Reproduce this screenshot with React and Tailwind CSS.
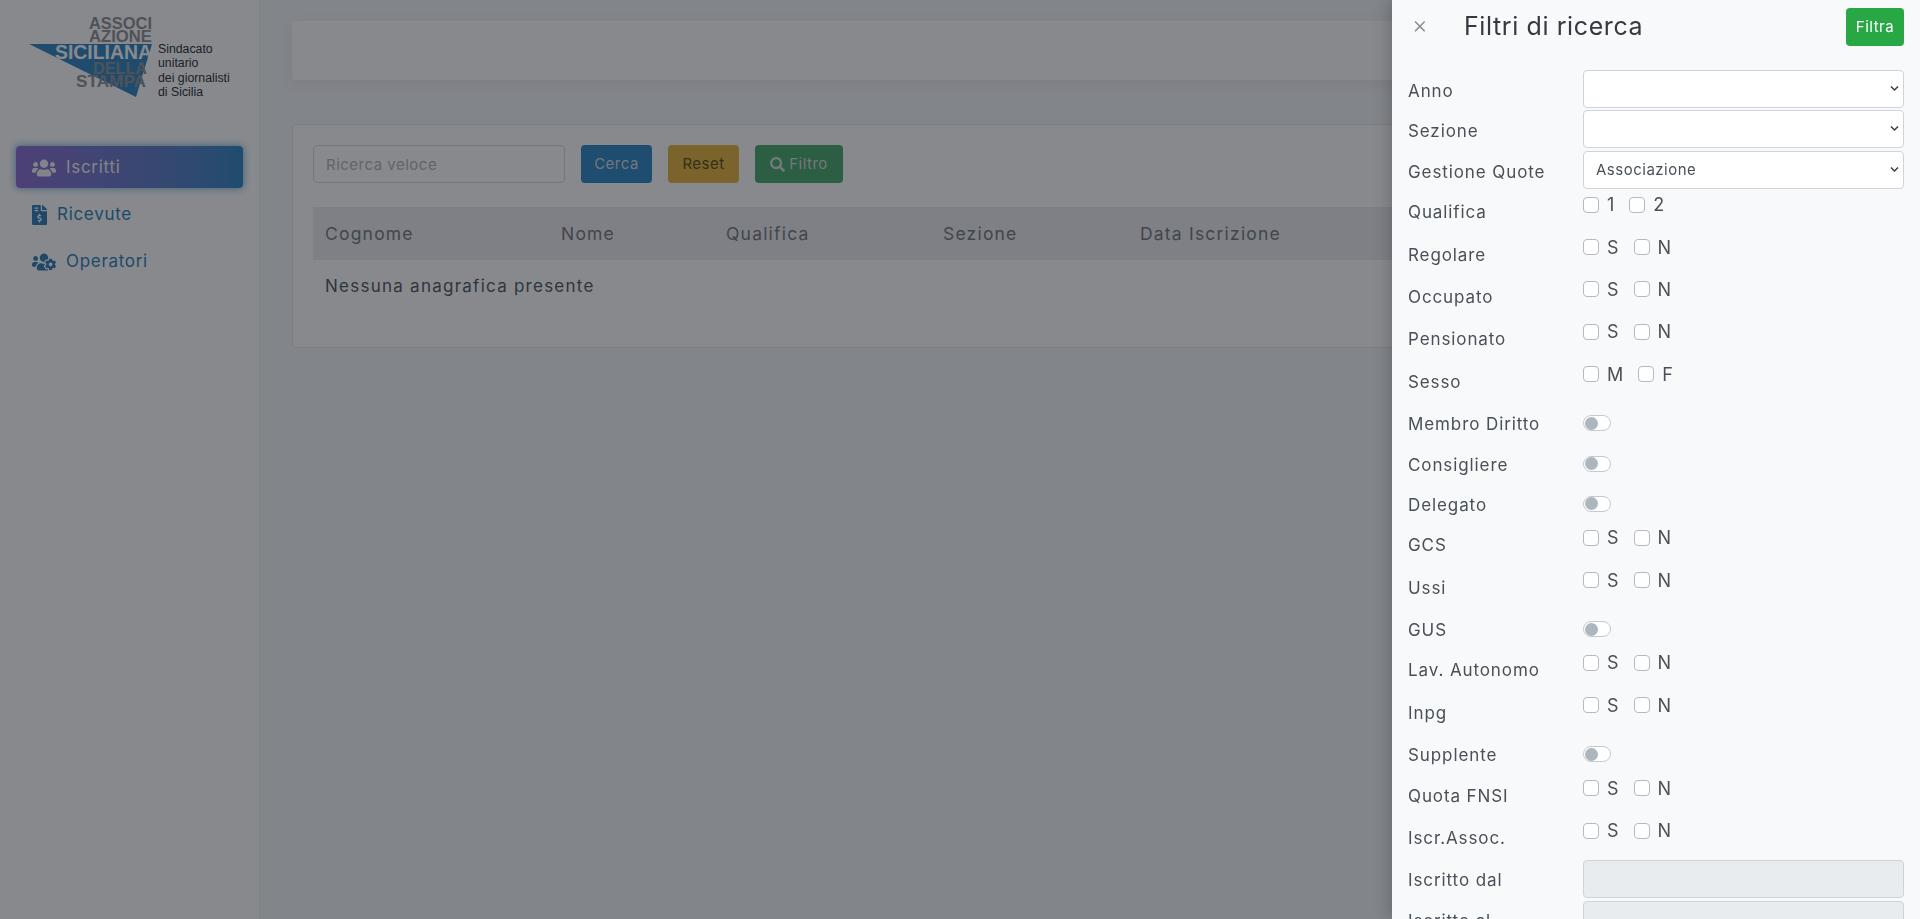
import React from 'react';
import { FaUsers, FaFileInvoiceDollar, FaUsersCog, FaSearch } from 'react-icons/fa';

const Logo = () => (
  <div className="h-[120px] flex items-start">
    <svg width="230" height="110" viewBox="0 0 230 110" className="font-['Liberation_Sans',sans-serif]">
      <polygon points="29,44 152,44 136,97" fill="#2f84c0" />
      <g fontWeight="700" fill="#8f9194" fontSize="16.5">
        <text x="89" y="29" textLength="63" lengthAdjust="spacingAndGlyphs">ASSOCI</text>
        <text x="89" y="42" textLength="63" lengthAdjust="spacingAndGlyphs">AZIONE</text>
        <text x="93" y="74" textLength="54" lengthAdjust="spacingAndGlyphs">DELLA</text>
        <text x="76" y="87" textLength="70" lengthAdjust="spacingAndGlyphs">STAMPA</text>
      </g>
      <text x="55" y="59" fontSize="20" fontWeight="700" fill="#ffffff" textLength="97" lengthAdjust="spacingAndGlyphs">SICILIANA</text>
      <g fontSize="12.3" fill="#2a2c30">
        <text x="158" y="53">Sindacato</text>
        <text x="158" y="67">unitario</text>
        <text x="158" y="82">dei giornalisti</text>
        <text x="158" y="96">di Sicilia</text>
      </g>
    </svg>
  </div>
);

const Sidebar = () => (
  <aside className="w-[260px] shrink-0 bg-[#ffffff] border-r border-[#f0f0f0] px-4 flex flex-col">
    <div className="-mx-4">
      <Logo />
    </div>
    <nav className="mt-[26px] flex flex-col gap-[5px] text-[17px] tracking-[0.7px]">
      <a className="h-[42px] flex items-center gap-[10px] px-4 pt-[1px] rounded bg-gradient-to-r from-[#8a6cd0] to-[#2f84c0] text-[#f4f4f6] shadow-[0_0_7px_1px_rgba(47,132,192,.6)]">
        <FaUsers className="w-6 h-5" />
        Iscritti
      </a>
      <a className="h-[42px] flex items-center gap-[10px] px-4 pt-[1px] text-[#2f7cb5]">
        <FaFileInvoiceDollar className="w-[15px] h-[20px]" />
        Ricevute
      </a>
      <a className="h-[42px] flex items-center gap-[10px] px-4 pt-[1px] text-[#2f7cb5]">
        <FaUsersCog className="w-6 h-5" />
        Operatori
      </a>
    </nav>
  </aside>
);

const Main = () => (
  <main className="flex-1 min-w-0 px-8 pt-[21px]">
    <div className="h-[59px] rounded bg-white shadow-[0_4px_15px_rgba(0,0,0,.07)]" />
    <section className="mt-[44px] h-[224px] rounded border border-[#e4e4e7] bg-white px-5 pt-[20px]">
      <div className="flex items-center gap-4 text-[15px] tracking-[0.5px]">
        <input
          placeholder="Ricerca veloce"
          className="w-[252px] h-[38px] px-3 rounded border border-[#d6d7dc] placeholder:text-[#b3b5b9]"
        />
        <button className="w-[71px] h-[38px] pt-[1px] rounded bg-[#2d86c4] text-[#d8d9de]">Cerca</button>
        <button className="w-[71px] h-[38px] pt-[1px] rounded bg-[#e4b43a] text-[#5d4b15]">Reset</button>
        <button className="w-[88px] h-[38px] pt-[1px] rounded bg-[#47a868] text-[#d8dcdc] flex items-center justify-center gap-1">
          <FaSearch className="w-[15px] h-[15px]" />
          Filtro
        </button>
      </div>
      <div className="mt-[24px] h-[53px] pt-[2px] bg-[#ecedf0] flex items-center text-[#73787d] text-[17.5px] tracking-[1.2px]">
        <span className="w-[236px] pl-3">Cognome</span>
        <span className="w-[165px] pl-3">Nome</span>
        <span className="w-[217px] pl-3">Qualifica</span>
        <span className="w-[197px] pl-3">Sezione</span>
        <span className="pl-3">Data Iscrizione</span>
      </div>
      <p className="pl-3 mt-[14px] text-[17px] tracking-[1.25px] text-[#51565b]">Nessuna anagrafica presente</p>
    </section>
  </main>
);

const Row = ({ label, tall, children }) => (
  <div className={tall ? 'flex h-[42.4px]' : 'flex h-[40.4px]'}>
    <label className="w-[175px] shrink-0 pt-[9px] leading-6">{label}</label>
    <div className="flex-1 min-w-0">{children}</div>
  </div>
);

const Select = ({ value }) => (
  <div className="relative">
    <select
      defaultValue={value}
      className="w-full h-[38px] pl-3 pr-2 appearance-none bg-white rounded border border-[#ced4da] text-[15px] tracking-[0.5px] text-[#495057]"
    >
      <option>{value}</option>
    </select>
    {/* freccia della select */}
    <svg className="absolute right-[5px] top-[15px] pointer-events-none" width="9" height="7" viewBox="0 0 9 7">
      <path d="M1 1.5 L4.5 5 L8 1.5" fill="none" stroke="#343a40" strokeWidth="1.4" />
    </svg>
  </div>
);

const Checks = ({ items }) => (
  <div className="flex items-center h-6 gap-[15px] pt-[3px] text-[18px] tracking-normal">
    {items.map((item) => (
      <span key={item} className="flex items-center gap-2">
        <span className="w-4 h-4 rounded-[4px] bg-white border border-[#b4bac0]" />
        {item}
      </span>
    ))}
  </div>
);

const Toggle = () => (
  <div className="mt-[12px] w-7 h-4 rounded-lg border border-[#c4cad0] bg-white flex items-center pl-[1px]">
    <span className="w-[13px] h-[13px] rounded-full bg-[#adb5bd]" />
  </div>
);

const DateInput = () => <div className="w-full h-[38px] mt-[1px] rounded border border-[#ced4da] bg-[#e9ecef]" />;

const SN = ['S', 'N'];

const FilterPanel = () => (
  <aside className="fixed top-0 right-0 bottom-0 w-[528px] bg-[#f8f9fa] overflow-hidden shadow-[-4px_0_14px_rgba(0,0,0,.18)] text-[#495057] text-[17px] tracking-[0.9px]">
    <header className="flex items-center h-[70px] pl-[20px] pr-4 pb-[17px]">
      <span className="w-[52px] -mt-[4px] text-[24px] font-light leading-none text-[#868e96]">×</span>
      <h2 className="text-[25px] tracking-[0.6px] text-[#343a40]">Filtri di ricerca</h2>
      <button className="ml-auto w-[58px] h-[38px] mt-[1px] rounded bg-[#28a745] text-[15px] tracking-[0.5px] text-white">Filtra</button>
    </header>
    <div className="pl-4 pr-4">
      <Row label="Anno"><Select value="" /></Row>
      <Row label="Sezione"><Select value="" /></Row>
      <Row label="Gestione Quote"><Select value="Associazione" /></Row>
      <Row tall label="Qualifica"><Checks items={['1', '2']} /></Row>
      <Row tall label="Regolare"><Checks items={SN} /></Row>
      <Row tall label="Occupato"><Checks items={SN} /></Row>
      <Row tall label="Pensionato"><Checks items={SN} /></Row>
      <Row tall label="Sesso"><Checks items={['M', 'F']} /></Row>
      <Row label="Membro Diritto"><Toggle /></Row>
      <Row label="Consigliere"><Toggle /></Row>
      <Row label="Delegato"><Toggle /></Row>
      <Row tall label="GCS"><Checks items={SN} /></Row>
      <Row tall label="Ussi"><Checks items={SN} /></Row>
      <Row label="GUS"><Toggle /></Row>
      <Row tall label="Lav. Autonomo"><Checks items={SN} /></Row>
      <Row tall label="Inpg"><Checks items={SN} /></Row>
      <Row label="Supplente"><Toggle /></Row>
      <Row tall label="Quota FNSI"><Checks items={SN} /></Row>
      <Row tall label="Iscr.Assoc."><Checks items={SN} /></Row>
      <Row label="Iscritto dal"><DateInput /></Row>
      <Row label="Iscritto al"><DateInput /></Row>
    </div>
  </aside>
);

export default function App() {
  return (
    <div className="h-screen overflow-hidden flex bg-[#f5f6f8] font-[Inter,sans-serif]">
      <Sidebar />
      <Main />
      {/* sfondo scuro sotto al pannello filtri */}
      <div className="fixed inset-0 bg-[#10141c]/50" />
      <FilterPanel />
    </div>
  );
}
